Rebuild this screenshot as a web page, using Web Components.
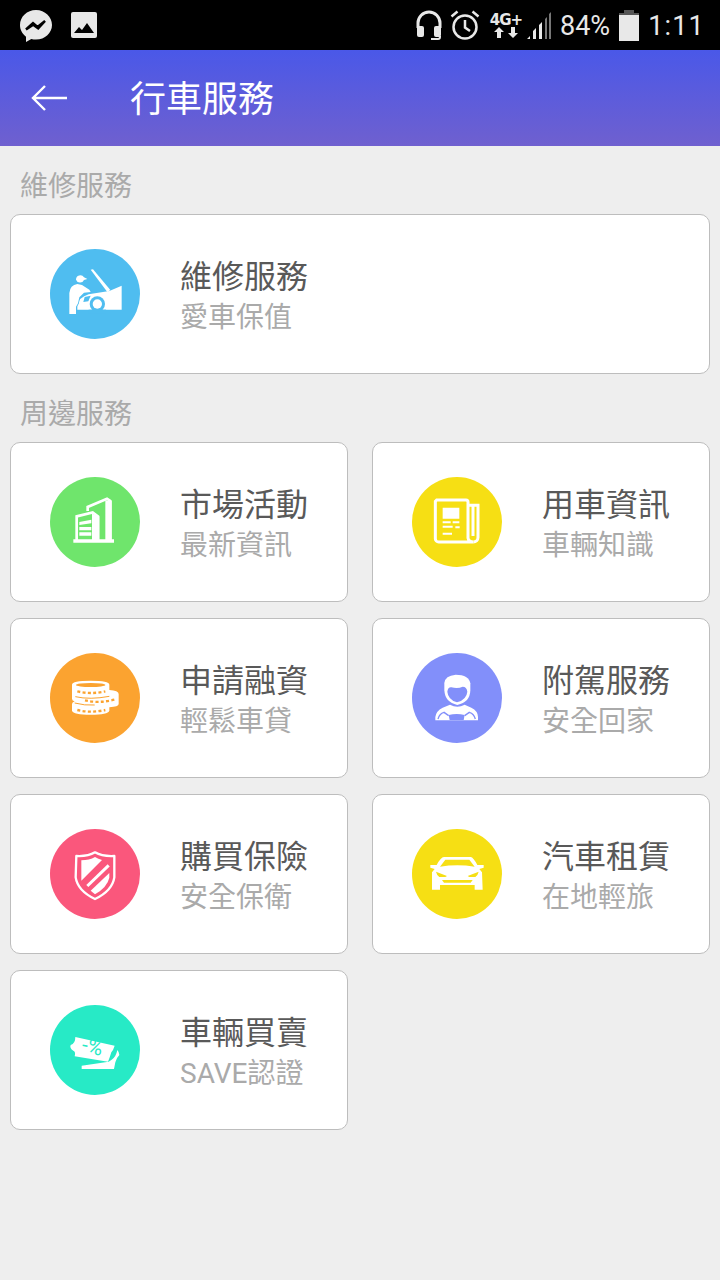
<!DOCTYPE html>
<html lang="zh-Hant">
<head>
<meta charset="utf-8">
<title>行車服務</title>
<style>
  html, body { margin: 0; padding: 0; background: #eeeeee; }
  body { width: 720px; height: 1280px; overflow: hidden; font-family: "Noto Sans CJK TC", "Noto Sans", sans-serif; }
</style>
</head>
<body>
<service-page>
  <status-bar></status-bar>
  <app-bar>行車服務</app-bar>
  <section-title>維修服務</section-title>
  <service-grid>
    <service-card icon="repair" color="#4fbdf0" wide>維修服務<span slot="sub">愛車保值</span></service-card>
  </service-grid>
  <section-title>周邊服務</section-title>
  <service-grid>
    <service-card icon="building" color="#6fe56c">市場活動<span slot="sub">最新資訊</span></service-card>
    <service-card icon="news" color="#f6df14">用車資訊<span slot="sub">車輛知識</span></service-card>
    <service-card icon="coins" color="#fba330">申請融資<span slot="sub">輕鬆車貸</span></service-card>
    <service-card icon="driver" color="#828ffa">附駕服務<span slot="sub">安全回家</span></service-card>
    <service-card icon="shield" color="#fa577c">購買保險<span slot="sub">安全保衛</span></service-card>
    <service-card icon="car" color="#f6df14">汽車租賃<span slot="sub">在地輕旅</span></service-card>
    <service-card icon="ticket" color="#27eac6">車輛買賣<span slot="sub">SAVE認證</span></service-card>
  </service-grid>
</service-page>

<script>
// Icons are drawn in the 270 unit space of the zoomed crops (circle spans 30..300)
const ICONS = {
  repair: `
    <path fill="#fff" d="M152 92l7-1 52 62-9 6z"/>
    <path fill="#fff" d="M112 212v-14q4-22 34-32l62-10 37-16v72z"/>
    <circle cx="172" cy="195" r="23" fill="#4fbdf0"/>
    <rect x="146" y="212" width="52" height="12" fill="#4fbdf0"/>
    <circle cx="172" cy="195" r="14" fill="#fff"/>
    <path fill="#4fbdf0" d="M134 174l18-4-7 17-15 2z"/>
    <path fill="#fff" stroke="#4fbdf0" stroke-width="5" paint-order="stroke" d="M88 225V162q2-24 24-27l14 3 22 14 4 7-20 2-14 14-4 18-6 10v22z"/>
    <path fill="#fff" d="M108 122a13 13 0 0 1 24-7l10 5-10 3a13 13 0 0 1-24-1z"/>`,
  building: `
    <g fill="none" stroke="#fff" stroke-width="8">
      <path d="M143 132v-12l58-25 10 7v120"/>
      <path d="M110 222v-74l48-12 16 12v74"/>
    </g>
    <path fill="#fff" d="M196 100l19 2v120h-19zM156 140l22 8v74h-22z"/>
    <path fill="#fff" d="M100 217h122v10H100zM118 165l36-7v11l-36 5zM118 180h36v10h-36zM118 196h36v10h-36z"/>`,
  news: `
    <g fill="none" stroke="#fff" stroke-width="9">
      <path d="M104 99h88a6 6 0 0 1 6 6v108q2 12 16 12H110a10 10 0 0 1-10-10V103z"/>
      <path d="M198 115h30v96a14 14 0 0 1-14 14"/>
      <path d="M213 115v92"/>
    </g>
    <path fill="#fff" d="M122 122h50v33h-50zM122 163h24v6h-24zM152 163h20v6h-20zM122 176h30v6h-30zM160 178h13v6h-13zM122 197h28v6h-28z"/>`,
  coins: `
    <path fill="#fff" d="M96 125q0-12 56-12t56 12v16q28 2 28 12v30q0 8-28 10v10q-4 12-56 12t-56-12v-20q0-5 8-8-8-2-8-8z"/>
    <ellipse cx="152" cy="126" rx="44" ry="6" fill="#fba330"/>
    <g fill="none" stroke="#fba330" stroke-width="7" stroke-dasharray="9 7">
      <path d="M112 145q40 10 84 0"/>
      <path d="M135 172q40 10 88-2"/>
      <path d="M112 201q40 10 84 0"/>
    </g>
    <g fill="none" stroke="#fba330" stroke-width="3">
      <path d="M106 161q44 10 102-1"/>
      <path d="M104 180q30 8 60 6"/>
    </g>`,
  driver: `
    <path fill="#fff" d="M127 142v-22q2-22 34-25 40 0 44 26v21q-1 36-39 44-37-8-39-44z"/>
    <path fill="#828ffa" d="M136 146q2-14 12-13 20 5 34-2 12 0 14 15-2 24-31 32-27-8-29-32z"/>
    <path fill="#fff" d="M100 232v-10q2-18 22-28l22-9q22 12 44 0l20 9q20 10 20 28v10z"/>
    <path fill="none" stroke="#828ffa" stroke-width="4" d="M108 228q4-16 18-20l14 10M220 228q-4-16-18-20l-14 10"/>
    <path fill="#828ffa" d="M140 216q24-6 48 0l-3 15h-42z"/>`,
  shield: `
    <path fill="none" stroke="#fff" stroke-width="7" stroke-linejoin="round" d="M109 111q34 2 56-11 22 13 58 11v64q-6 40-58 65-52-25-58-65z"/>
    <path fill="#fff" d="M124 124q24 0 41-10 10 6 21 9l-62 62z"/>
    <path fill="none" stroke="#fff" stroke-width="9" d="M206 139l-64 62"/>
    <path fill="#fff" d="M208 162v14q-6 28-43 50l-13-11z"/>`,
  car: `
    <path fill="#fff" d="M126 114h80q8 1 20 24h19v8l-13 4 8 10 2 52h-24v-14H114v14H90v-52l8-10-13-4v-8h19q12-23 22-24z"/>
    <path fill="#f6df14" d="M130 122h72l16 21q-52-8-104 0z"/>
    <path fill="#f6df14" d="M102 158l33 13-5 3h-18q-8-6-10-16zM230 158l-33 13 5 3h18q8-6 10-16zM120 183h92l-6 8h-80z"/>`,
  ticket: `
    <path fill="#fff" d="M106 126l118 26q-4 13-10 20-4 14-10 28L104 184q4-14-4-17-12-7-8-17 14-4 14-24z"/>
    <path fill="#fff" d="M125 212l81-12 9-6q13-8 17-29 6 7 6 15-10 10-12 22l-4 20H125z"/>
    <text x="156" y="176" text-anchor="middle" transform="rotate(13 156 160)" font-family="Roboto, sans-serif" font-size="62" fill="#27eac6">-%</text>`
};

class StatusBar extends HTMLElement {
  constructor() {
    super();
    this.attachShadow({ mode: 'open' });
    this.shadowRoot.innerHTML = `
      <style>
        :host { display: flex; align-items: center; height: 50px; background: #000; color: #e8e8e8;
                font-family: Roboto, sans-serif; font-size: 27px; padding: 0 15px 0 20px; box-sizing: border-box; }
        svg { display: block; flex: none; }
        .spacer { flex: 1; }
        .net { display: flex; flex-direction: column; align-items: center; width: 30px; margin-left: 11px; }
        .net b { font: 700 15px/14px "DejaVu Sans", sans-serif; letter-spacing: -1px; }
        .txt { padding-top: 2px; }
      </style>
      <svg width="32" height="32" viewBox="0 0 32 32" style="margin-top:1px">
        <path fill="#e8e8e8" d="M16 0C7 0 0 6.700 0 15c0 4.700 2.300 8.900 6 11.700V32l5.300-3c1.500.4 3.100.600 4.700.600 9 0 16-6.700 16-14.600S25 0 16 0z"/>
        <path fill="none" stroke="#000" stroke-width="2.400" stroke-linejoin="miter" d="M6 19.500l7-6.500 4.500 4L25 11l-6.800 7.500-5-3.800z"/>
      </svg>
      <svg width="26" height="26" viewBox="0 0 26 26" style="margin-left:19px">
        <rect width="26" height="26" rx="2" fill="#e8e8e8"/>
        <path fill="#000" d="M3 21l5-6 3 3 5-7 7 10z"/>
      </svg>
      <span class="spacer"></span>
      <svg width="26" height="30" viewBox="0 0 26 30">
        <path fill="none" stroke="#e8e8e8" stroke-width="3" d="M2 18v-5a11 11 0 0 1 22 0v5"/>
        <rect x="1" y="16" width="7" height="11" rx="2" fill="#e8e8e8"/>
        <rect x="18" y="16" width="7" height="11" rx="2" fill="#e8e8e8"/>
        <path fill="none" stroke="#e8e8e8" stroke-width="2" d="M24 26v1a2 2 0 0 1-2 2h-7"/>
      </svg>
      <svg width="30" height="30" viewBox="0 0 30 30" style="margin-left:8px">
        <circle cx="15" cy="17" r="11.500" fill="none" stroke="#e8e8e8" stroke-width="2.500"/>
        <path fill="none" stroke="#e8e8e8" stroke-width="2.500" d="M15 10v7.500l5 3.500M1.500 6.500L7.500 1.500M28.500 6.500L22.500 1.500"/>
      </svg>
      <span class="net">
        <b>4G+</b>
        <svg width="24" height="11" viewBox="0 0 24 11"><path fill="#e8e8e8" d="M5 0l5 5H7v6H3V5H0zM19 11l-5-5h3V0h4v6h3z"/></svg>
      </span>
      <svg width="26" height="30" viewBox="0 0 26 30" style="margin-left:5px">
        <path fill="#e8e8e8" d="M1 29l3-3v3zM7 29v-8l3-3v11zM13 29V15l3-3v17z"/>
        <path fill="#777" d="M19 29V9l2-2v22zM23 29V4l2-2v27z"/>
      </svg>
      <span class="txt" style="margin-left:8px">84%</span>
      <svg width="20" height="31" viewBox="0 0 20 31" style="margin-left:9px">
        <path fill="#555" d="M5 0h10v3h5v4H0V3h5z"/>
        <rect y="5" width="20" height="26" fill="#e8e8e8"/>
      </svg>
      <span class="txt" style="margin-left:9px;letter-spacing:1.200px">1:11</span>`;
  }
}

class AppBar extends HTMLElement {
  constructor() {
    super();
    this.attachShadow({ mode: 'open' });
    this.shadowRoot.innerHTML = `
      <style>
        :host { display: flex; align-items: center; height: 96px; box-sizing: border-box; padding-left: 30px;
                background: linear-gradient(180deg, #4a58e8, #6f60cf); color: #fff;
                font-size: 36px; line-height: 1; }
        svg { display: block; margin-right: 62px; }
        span { margin-top: -4px; }
      </style>
      <svg width="38" height="30" viewBox="0 0 38 30">
        <path fill="none" stroke="#fff" stroke-width="2.400" d="M37 15H3M15 3L3 15l12 12"/>
      </svg>
      <span><slot></slot></span>`;
  }
}

class SectionTitle extends HTMLElement {
  constructor() {
    super();
    this.attachShadow({ mode: 'open' });
    this.shadowRoot.innerHTML = `
      <style>
        :host { display: flex; align-items: flex-end; height: 68px; box-sizing: border-box;
                padding: 0 0 14px 20px; color: #aaaaaa; font-size: 28px; line-height: 32px; }
      </style>
      <slot></slot>`;
  }
}

class ServiceGrid extends HTMLElement {
  constructor() {
    super();
    this.attachShadow({ mode: 'open' });
    this.shadowRoot.innerHTML = `
      <style>
        :host { display: grid; grid-template-columns: 338px 338px; gap: 16px 24px; padding: 0 10px; }
      </style>
      <slot></slot>`;
  }
}

class ServiceCard extends HTMLElement {
  constructor() {
    super();
    this.attachShadow({ mode: 'open' });
    const icon = ICONS[this.getAttribute('icon')] || '';
    const color = this.getAttribute('color') || '#ccc';
    this.shadowRoot.innerHTML = `
      <style>
        :host { display: flex; align-items: center; height: 160px; box-sizing: border-box;
                padding-left: 39px; background: #fff; border: 1px solid #bdbdbd; border-radius: 10px; }
        :host([wide]) { grid-column: 1 / -1; }
        svg { display: block; flex: none; margin-right: 40px; }
        .text { display: flex; flex-direction: column; margin-top: 3px; }
        .title { color: #595959; font-size: 32px; line-height: 42px; }
        .sub { color: #aaaaaa; font-size: 28px; line-height: 40px; margin-top: 3px; font-family: Roboto, "Noto Sans CJK TC", sans-serif; }
      </style>
      <svg width="90" height="90" viewBox="30 30 270 270">
        <circle cx="165" cy="165" r="135" fill="${color}"/>
        ${icon}
      </svg>
      <div class="text">
        <div class="title"><slot></slot></div>
        <div class="sub"><slot name="sub"></slot></div>
      </div>`;
  }
}

class ServicePage extends HTMLElement {
  constructor() {
    super();
    this.attachShadow({ mode: 'open' });
    this.shadowRoot.innerHTML = `
      <style>
        :host { display: block; width: 720px; height: 1280px; background: #eeeeee; }
      </style>
      <slot></slot>`;
  }
}

customElements.define('status-bar', StatusBar);
customElements.define('app-bar', AppBar);
customElements.define('section-title', SectionTitle);
customElements.define('service-grid', ServiceGrid);
customElements.define('service-card', ServiceCard);
customElements.define('service-page', ServicePage);
</script>
</body>
</html>
